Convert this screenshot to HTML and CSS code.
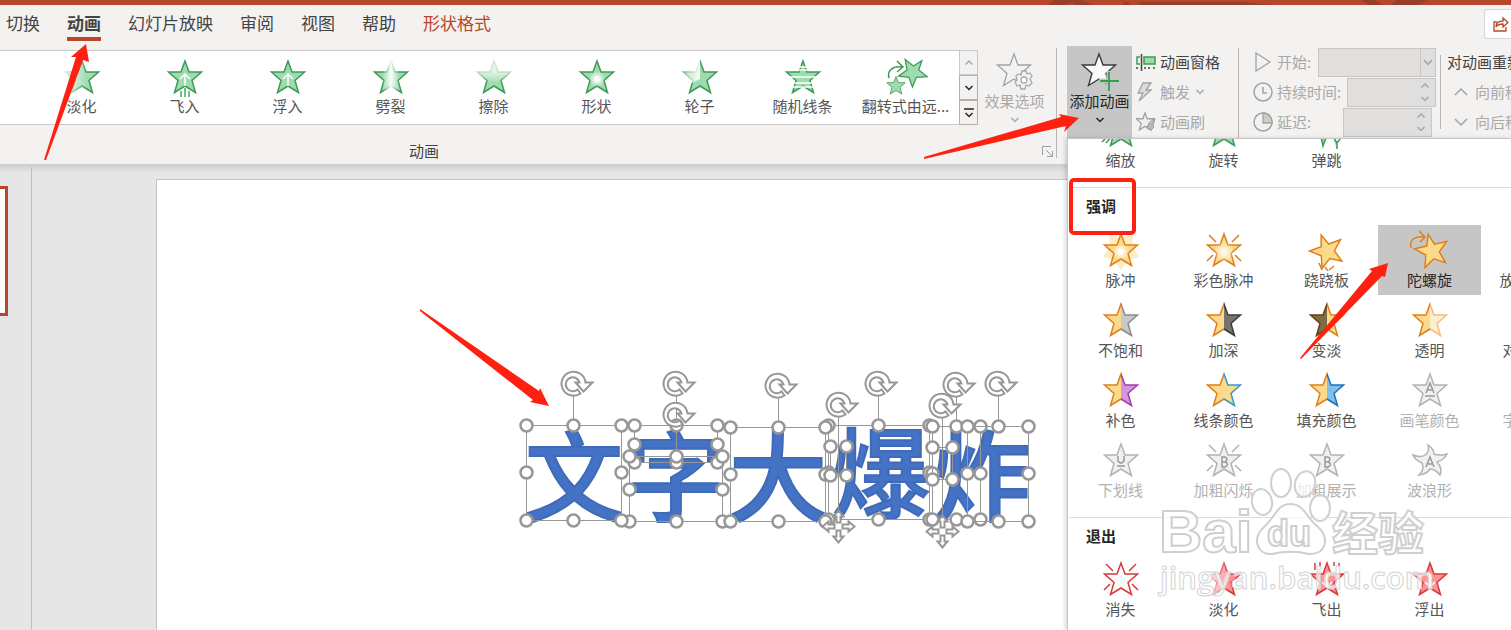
FILE: index.html
```html
<!DOCTYPE html>
<html lang="zh-CN">
<head>
<meta charset="utf-8">
<title>动画</title>
<link rel="stylesheet" href="styles.css">
</head>
<body>
<svg class="defs" aria-hidden="true">
  <defs>
    <path id="star" d="M0-17 4-6H16.500L7 2.500 10.500 14.500 0 8-10.500 14.500-7 2.500-16.500-6H-4Z"/>
    <clipPath id="left-half"><rect x="-22" y="-22" width="22" height="44"/></clipPath>
    <clipPath id="right-half"><rect x="0" y="-22" width="22" height="44"/></clipPath>
    <linearGradient id="fade-left"><stop offset="0" stop-color="#fff" stop-opacity=".9"/><stop offset=".65" stop-color="#fff" stop-opacity="0"/></linearGradient>
    <linearGradient id="fade-mid"><stop offset=".15" stop-color="#fff" stop-opacity="0"/><stop offset=".5" stop-color="#fff" stop-opacity=".95"/><stop offset=".85" stop-color="#fff" stop-opacity="0"/></linearGradient>
    <linearGradient id="fade-top" x2="0" y2="1"><stop offset="0" stop-color="#fff" stop-opacity=".8"/><stop offset=".4" stop-color="#fff" stop-opacity=".7"/><stop offset=".75" stop-color="#fff" stop-opacity="0"/></linearGradient>
    <linearGradient id="fade-quarter"><stop offset="0" stop-color="#fff" stop-opacity=".3"/><stop offset="1" stop-color="#fff" stop-opacity=".9"/></linearGradient>
    <radialGradient id="glow"><stop offset=".2" stop-color="#fff"/><stop offset="1" stop-color="#fff" stop-opacity="0"/></radialGradient>
    <path id="rays" d="M-15-16-8-9M15-16 8-9M-17 10-11 4M17 10 11 4" fill="none"/>
    <path id="down" d="M-3.500-2 0 1.500 3.500-2" fill="none" stroke="currentColor" stroke-width="1.500"/>
    <path id="up" d="M-3.500 1.500 0-2 3.500 1.500" fill="none" stroke="currentColor" stroke-width="1.500"/>
    <path id="rotate" d="M12-1A12 12 0 1 0 7 10L4 6A7 7 0 1 1 6-1H2L10 8 19-1Z"/>
    <path id="move" d="M0-16-5-10H-2V-4H2V-10H5ZM0 16-5 10H-2V4H2V10H5ZM-16 0-10-5V-2H-4V2H-10V5ZM16 0 10-5V-2H4V2H10V5Z"/>
    <marker id="handle" viewBox="-8 -8 16 16" markerWidth="16" markerHeight="16" markerUnits="userSpaceOnUse"><circle r="6" fill="#fff" stroke="#979797" stroke-width="2.500"/></marker>
  </defs>
</svg>

<div class="app">
  <div class="titlebar">
    <svg class="titlebar-art" width="466" height="5" aria-hidden="true"><path d="M3 5 9 0H37L47 5H31L27 2 21 5ZM78 5V2H84V5ZM92 2H200L226 5H96ZM316 0H330L337 5H324ZM345 5 352 0H382L374 5Z" fill="#96402b"/></svg>
  </div>
  <nav class="tabs">
    <a class="tab" href="#">切换</a>
    <a class="tab tab-active" href="#">动画</a>
    <a class="tab" href="#">幻灯片放映</a>
    <a class="tab" href="#">审阅</a>
    <a class="tab" href="#">视图</a>
    <a class="tab" href="#">帮助</a>
    <a class="tab tab-context" href="#">形状格式</a>
    <button class="share" aria-label="共享"><svg width="16" height="16" viewBox="0 0 16 16"><path d="M4 6H1V15H13V11M3 11C3 7 6 5 10 5V2L15 6.500 10 11V8C6 8 4 9 3 11Z" fill="none" stroke="#b7472a" stroke-width="1.300"/></svg></button>
  </nav>

  <div class="ribbon">
    <section class="group group-effects">
      <div class="group-row">
        <div class="gallery">
          <button class="effect"><svg class="icon green" viewBox="-22 -20 44 40"><use href="#star"/><rect class="veil" x="-18" y="-19" width="36" height="36" fill="url(#fade-left)"/></svg><span>淡化</span></button>
          <button class="effect"><svg class="icon green" viewBox="-22 -20 44 40"><use href="#star"/><path d="M0 8V-3M-5 1 0-4 5 1" stroke="#fff" fill="none"/><path d="M-4 13V19M0 10V19M4 13V19" stroke="#6fc088" stroke-width="2"/></svg><span>飞入</span></button>
          <button class="effect"><svg class="icon green" viewBox="-22 -20 44 40"><use href="#star"/><path d="M0 8V-3M-5 1 0-4 5 1" stroke="#fff" fill="none"/></svg><span>浮入</span></button>
          <button class="effect"><svg class="icon green" viewBox="-22 -20 44 40"><use href="#star"/><rect class="veil" x="-12" y="-19" width="24" height="36" fill="url(#fade-mid)"/></svg><span>劈裂</span></button>
          <button class="effect"><svg class="icon green" viewBox="-22 -20 44 40"><use href="#star"/><rect class="veil" x="-18" y="-19" width="36" height="32" fill="url(#fade-top)"/></svg><span>擦除</span></button>
          <button class="effect"><svg class="icon green" viewBox="-22 -20 44 40"><use href="#star"/><circle class="veil" cy="1" r="8" fill="url(#glow)"/></svg><span>形状</span></button>
          <button class="effect"><svg class="icon green" viewBox="-22 -20 44 40"><use href="#star"/><path class="veil" d="M0-19V1L-10 6-18-3V-19Z" fill="url(#fade-quarter)"/></svg><span>轮子</span></button>
          <button class="effect"><svg class="icon green" viewBox="-22 -20 44 40"><use href="#star"/><path d="M-8-11H8M-8-8H8M-15-1H15M-12 5H12M-12 9H12" stroke="#fff" stroke-width="1.300"/></svg><span>随机线条</span></button>
          <button class="effect"><svg class="icon green" viewBox="-22 -20 44 40"><use href="#star" transform="translate(7 -6) rotate(38) scale(.84)"/><use href="#star" transform="translate(-10 8) scale(.56)"/><path d="M-17 0C-19-7-14-12-4-11M-9-17-3-11-9-6" fill="none"/></svg><span>翻转式由远...</span></button>
        </div>
        <div class="scroller">
          <button class="scroll-off" aria-label="上一行"><svg class="chev" viewBox="-6 -6 12 12"><use href="#up"/></svg></button>
          <button aria-label="下一行"><svg class="chev" viewBox="-6 -6 12 12"><use href="#down"/></svg></button>
          <button aria-label="更多"><svg class="chev" viewBox="-6 -6 12 12"><path d="M-5-4H5" stroke="currentColor" stroke-width="1.500"/><use href="#down" y="2"/></svg></button>
        </div>
        <button class="big-button" disabled>
          <svg class="icon" viewBox="-22 -20 44 40"><use href="#star" x="-1" y="-1" fill="#f4f3f4" stroke="#a3a3a3" stroke-width="1.300"/><g transform="translate(9 8)"><path d="M-2-9H2L3-6 6-7 8-4 6-1 8 3 5 6 2 5 1 9H-3L-4 5-7 6-9 2-7 0-8-4-6-6-3-5Z" fill="#f3f2f1" stroke="#a8a8a8" stroke-width="1.300"/><circle r="3" fill="#fff" stroke="#a8a8a8" stroke-width="1.300"/></g></svg>
          <span>效果选项</span>
          <svg class="chev" viewBox="-6 -6 12 12"><use href="#down"/></svg>
        </button>
      </div>
      <div class="group-foot"><span class="group-label">动画</span><button class="launcher" aria-label="更多选项"><svg width="11" height="11" viewBox="0 0 11 11"><path d="M.500 9V.500H9M4 4 10 10M10.500 5V10.500H5" fill="none" stroke="#a0a0a0"/></svg></button></div>
    </section>

    <section class="group group-advanced">
      <button class="big-button big-open">
        <svg class="icon" viewBox="-22 -20 44 40"><use href="#star" x="-1" y="-1" fill="#fafafa" stroke="#3b3b3b" stroke-width="1.400"/><path d="M9-1V19M-1 9H20" stroke="#c6c6c6" stroke-width="5"/><path d="M9 0V19M0 9H19" stroke="#2fa24f" stroke-width="1.800"/></svg>
        <span>添加动画</span>
        <svg class="chev" viewBox="-6 -6 12 12"><use href="#down"/></svg>
      </button>
      <div class="stack">
        <button class="small-button"><svg width="20" height="20" viewBox="0 0 20 20"><path d="M8 5H19V12H8Z" fill="#9ed9ae" stroke="#3d9a57" stroke-width="1.500"/><path d="M4 5H1V12H4" fill="none" stroke="#3d9a57" stroke-width="1.500"/><path d="M5.500 2V19M1 15V17M9 15V17M13 15V17M18 15V17" stroke="#444" stroke-width="1.500"/></svg><span>动画窗格</span></button>
        <button class="small-button" disabled><svg width="20" height="20" viewBox="0 0 20 20"><path d="M7 1H15L10 8H15L3 19 7 11H2Z" fill="#dcdcdc" stroke="#a3a3a3" stroke-width="1.300"/></svg><span>触发</span><svg class="chev" viewBox="-6 -6 12 12"><use href="#down"/></svg></button>
        <button class="small-button" disabled><svg width="20" height="20" viewBox="-10 -10 20 20"><use href="#star" transform="translate(-1 0) scale(.54)" fill="#eee" stroke="#a3a3a3" stroke-width="2.500"/><path d="M9-3 5 2 2 3 1 6 5 8 8 5 7 3Z" fill="#bbb" stroke="#999"/></svg><span>动画刷</span></button>
      </div>
    </section>

    <section class="group group-timing">
      <div class="field"><svg width="20" height="20" viewBox="0 0 20 20"><path d="M3 1 17 10 3 19Z" fill="none" stroke="#a3a3a3" stroke-width="1.300"/></svg><label for="start">开始:</label><span class="control control-start"><select id="start" disabled><option></option></select><svg class="chev" viewBox="-6 -6 12 12"><use href="#down"/></svg></span></div>
      <div class="field"><svg width="20" height="20" viewBox="0 0 20 20"><circle cx="10" cy="10" r="9" fill="none" stroke="#a3a3a3" stroke-width="1.500"/><path d="M10 5V11H14" fill="none" stroke="#a3a3a3" stroke-width="1.500"/></svg><label for="duration">持续时间:</label><span class="control"><input id="duration" disabled><span class="spin"><svg class="chev" viewBox="-6 -6 12 12"><use href="#up"/></svg><svg class="chev" viewBox="-6 -6 12 12"><use href="#down"/></svg></span></span></div>
      <div class="field field-delay"><svg width="20" height="20" viewBox="0 0 20 20"><circle cx="10" cy="10" r="9" fill="none" stroke="#a3a3a3" stroke-width="1.500"/><path d="M10 1A9 9 0 0 1 19 11H10Z" fill="#ccc" stroke="#a3a3a3" stroke-width="1.300"/></svg><label for="delay">延迟:</label><span class="control"><input id="delay" disabled><span class="spin"><svg class="chev" viewBox="-6 -6 12 12"><use href="#up"/></svg><svg class="chev" viewBox="-6 -6 12 12"><use href="#down"/></svg></span></span></div>
    </section>

    <section class="reorder">
      <div class="reorder-title">对动画重新排序</div>
      <button class="small-button" disabled><svg width="14" height="14" viewBox="-7 -7 14 14"><path d="M-6 3 0-3 6 3" fill="none" stroke="#a3a3a3" stroke-width="1.500"/></svg><span>向前移动</span></button>
      <button class="small-button" disabled><svg width="14" height="14" viewBox="-7 -7 14 14"><path d="M-6-3 0 3 6-3" fill="none" stroke="#a3a3a3" stroke-width="1.500"/></svg><span>向后移动</span></button>
    </section>
  </div>

  <main class="workspace">
    <aside class="thumbs"><div class="thumb"></div></aside>
    <div class="stage">
      <div class="slide">
        <svg class="canvas" viewBox="157 180 900 450" width="900" height="450">
          <text class="art-text" x="574" y="513">文</text>
          <text class="art-text" x="676" y="513">字</text>
          <text class="art-text" x="778" y="513">大</text>
          <text class="art-text" x="881" y="510">爆</text>
          <text class="art-text" x="982" y="513">炸</text>
          <g class="selection" transform="translate(.500 .500)">
            <path d="M573 425V395M676 425V395M676 456V426M778 427V397M878 425V395M838 520V416M942 526V417M956 426V396M998 425V395"/>
            <g class="frames">
              <path d="M634 425H676 717V444 462H676 634V444Z"/>
              <path d="M629 456H676 722V489 521H676 629V489Z"/>
              <path d="M526 425H573 621V472 520H573 526V472Z"/>
              <path d="M828 425H878 929V472 519H878 828V472Z"/>
              <path d="M730 427H778 825V474 521H778 730V474Z"/>
              <path d="M830 446H846V475H830Z"/>
              <path d="M932 426H956 980V473 519H956 932V473Z"/>
              <path d="M967 426H998 1028V473 521H998 967V473Z"/>
              <path d="M932 447H952V479H932Z"/>
            </g>
            <g class="glyphs">
              <use href="#rotate" x="573" y="383"/><use href="#rotate" x="675" y="383"/><use href="#rotate" x="675" y="414"/><use href="#rotate" x="777" y="385"/><use href="#rotate" x="838" y="404"/><use href="#rotate" x="877" y="383"/><use href="#rotate" x="955" y="384"/><use href="#rotate" x="941" y="405"/><use href="#rotate" x="997" y="383"/>
              <use href="#move" x="838" y="526"/><use href="#move" x="942" y="531"/>
            </g>
          </g>
        </svg>
      </div>
    </div>
  </main>

  <div class="menu">
    <div class="menu-scroll">
      <div class="menu-grid">
        <button class="effect"><svg class="icon green" viewBox="-22 -20 44 40"><use href="#star"/><path d="M-19 11-15 7M-15 12-10 6"/></svg><span>缩放</span></button>
        <button class="effect"><svg class="icon green" viewBox="-22 -20 44 40"><use href="#star"/></svg><span>旋转</span></button>
        <button class="effect"><svg class="icon green" viewBox="-22 -20 44 40"><path d="M-8-4-4 15 0 4M5 4 10 12V18M10 12 16 4"/></svg><span>弹跳</span></button>
      </div>
      <h2 class="menu-title">强调</h2>
      <div class="menu-grid">
        <button class="effect"><svg class="icon amber" viewBox="-22 -20 44 40"><path d="M-12-17 0-13 12-17 11-6 18 6 7 9 0 19-7 9-18 6-11-6Z" fill="#fdecc4" stroke="none"/><use href="#star"/><circle r="8" cy="1" class="veil" fill="url(#glow)"/></svg><span>脉冲</span></button>
        <button class="effect"><svg class="icon amber" viewBox="-22 -20 44 40"><use href="#star"/><circle r="10" cy="1" class="veil" fill="url(#glow)" opacity=".8"/><use href="#rays"/></svg><span>彩色脉冲</span></button>
        <button class="effect"><svg class="icon amber" viewBox="-22 -20 44 40"><use href="#star" transform="rotate(-20)"/><path d="M-8 12-5 19M-2 16 1 20M7 15 2 19" fill="none"/></svg><span>跷跷板</span></button>
        <button class="effect effect-hover"><svg class="icon amber" viewBox="-22 -20 44 40"><use href="#star" transform="translate(2 0) rotate(-13)"/><path d="M-19-3C-21-12-15-15-5-14M-11-20-5-14-10-9" fill="none"/></svg><span>陀螺旋</span></button>
        <button class="effect"><svg class="icon amber" viewBox="-22 -20 44 40"><use href="#star"/></svg><span>放大/缩小</span></button>

        <button class="effect"><svg class="icon amber" viewBox="-22 -20 44 40"><use href="#star" clip-path="url(#left-half)"/><use href="#star" clip-path="url(#right-half)" fill="#c9c9c9" stroke="#8b8b8b"/></svg><span>不饱和</span></button>
        <button class="effect"><svg class="icon amber" viewBox="-22 -20 44 40"><use href="#star" clip-path="url(#left-half)"/><use href="#star" clip-path="url(#right-half)" fill="#757471" stroke="#3d3d3d"/></svg><span>加深</span></button>
        <button class="effect"><svg class="icon amber" viewBox="-22 -20 44 40"><use href="#star" clip-path="url(#left-half)" fill="#7e6c45" stroke="#6e3d10"/><use href="#star" clip-path="url(#right-half)"/></svg><span>变淡</span></button>
        <button class="effect"><svg class="icon amber" viewBox="-22 -20 44 40"><use href="#star" clip-path="url(#left-half)"/><use href="#star" clip-path="url(#right-half)" fill="#feefcc" stroke="#f3bd83"/></svg><span>透明</span></button>
        <button class="effect"><svg class="icon amber" viewBox="-22 -20 44 40"><use href="#star"/></svg><span>对象颜色</span></button>

        <button class="effect"><svg class="icon amber" viewBox="-22 -20 44 40"><use href="#star" clip-path="url(#left-half)"/><use href="#star" clip-path="url(#right-half)" fill="#d595dc" stroke="#a13fac"/></svg><span>补色</span></button>
        <button class="effect"><svg class="icon amber" viewBox="-22 -20 44 40"><use href="#star" clip-path="url(#left-half)"/><use href="#star" clip-path="url(#right-half)" stroke="#2e9bd6"/></svg><span>线条颜色</span></button>
        <button class="effect"><svg class="icon amber" viewBox="-22 -20 44 40"><use href="#star" clip-path="url(#left-half)"/><use href="#star" clip-path="url(#right-half)" fill="#83beec" stroke="#1c71b9"/></svg><span>填充颜色</span></button>
        <button class="effect" disabled><svg class="icon grey" viewBox="-22 -20 44 40"><use href="#star"/><path d="M-4 2 0-8 4 2M-3-1H3M-5 5H5" fill="none" stroke="#999"/></svg><span>画笔颜色</span></button>
        <button class="effect" disabled><svg class="icon grey" viewBox="-22 -20 44 40"><use href="#star"/></svg><span>字体颜色</span></button>

        <button class="effect" disabled><svg class="icon grey" viewBox="-22 -20 44 40"><use href="#star"/><path d="M-3-5V0Q0 4 3 0V-5M-4 5H4" fill="none" stroke="#999"/></svg><span>下划线</span></button>
        <button class="effect" disabled><svg class="icon grey" viewBox="-22 -20 44 40"><use href="#star"/><use href="#rays"/><path d="M-2-4V6H1Q6 3 1 1H-2 1Q5-2 1-4Z" stroke="#999"/></svg><span>加粗闪烁</span></button>
        <button class="effect" disabled><svg class="icon grey" viewBox="-22 -20 44 40"><use href="#star"/><path d="M-2-4V6H1Q6 3 1 1H-2 1Q5-2 1-4Z" stroke="#999"/></svg><span>加粗展示</span></button>
        <button class="effect" disabled><svg class="icon grey" viewBox="-22 -20 44 40"><path d="M-2-16Q4-12 4-7 10-5 17-7 14-1 7 1 13 7 10 14 5 8 0 8-3 13-11 14-5 8-8 2-15-1-17-6-9-3-5-6 0-9-2-16Z"/><path d="M-4 6 0-4 4 6M-2 3H3" fill="none" stroke="#999"/></svg><span>波浪形</span></button>
      </div>
      <h2 class="menu-title">退出</h2>
      <div class="menu-grid">
        <button class="effect"><svg class="icon red" viewBox="-22 -20 44 40"><use href="#star" fill="#fafafa"/><use href="#rays"/></svg><span>消失</span></button>
        <button class="effect"><svg class="icon red" viewBox="-22 -20 44 40"><use href="#star"/><rect class="veil" x="-18" y="-19" width="36" height="36" fill="url(#fade-left)"/></svg><span>淡化</span></button>
        <button class="effect"><svg class="icon red" viewBox="-22 -20 44 40"><use href="#star"/><path d="M-12-17V-10M-7-18V-14M7-18V-14M12-17V-13"/><path d="M0-7V6M-5 2 0 7 5 2" fill="none" stroke="#fff"/></svg><span>飞出</span></button>
        <button class="effect"><svg class="icon red" viewBox="-22 -20 44 40"><use href="#star"/><path d="M0-7V6M-5 2 0 7 5 2" fill="none" stroke="#fff"/></svg><span>浮出</span></button>
      </div>
    </div>
  </div>

  <svg class="overlay" width="1511" height="630" viewBox="0 0 1511 630">
    <g class="watermark">
      <text class="wm-brand" x="1159" y="552">Bai</text>
      <path d="M1290 504C1277 504 1275 518 1264 527 1252 537 1256 555 1272 554 1285 551 1296 551 1309 554 1326 555 1330 538 1318 527 1306 518 1305 504 1290 504Z"/>
      <ellipse cx="1281" cy="483" rx="10" ry="14"/><ellipse cx="1305" cy="484" rx="10" ry="13" transform="rotate(15 1305 484)"/><ellipse cx="1262" cy="502" rx="10" ry="13" transform="rotate(-12 1262 502)"/><ellipse cx="1320" cy="508" rx="10" ry="13"/>
      <text class="wm-du" x="1267" y="546">du</text>
      <text class="wm-cn" x="1332" y="550">经验</text>
      <text class="wm-url" x="1160" y="589">jingyan.baidu.com</text>
    </g>
    <g class="marks">
      <path d="M86 44 89 62 83 60 46 160H44L76 57 71 57Z"/>
      <path d="M1079 118 1064 132 1066 126 924 159V157L1061 117 1059 114Z"/>
      <path d="M549 406 530 402 533 400 420 311V309L539 391 540 388Z"/>
      <path d="M1388 263 1385 277 1382 276 1301 359 1300 358 1372 271 1369 269Z"/>
      <rect x="1071" y="180" width="63" height="53" rx="3"/>
    </g>
  </svg>
</div>
</body>
</html>
```
FILE: styles.css
```css
* { box-sizing: border-box; }

body {
  margin: 0;
  font-family: "Noto Sans CJK SC", "Noto Sans", sans-serif;
  font-size: 15px;
  line-height: 20px;
  color: #444;
}

button, input, select { font: inherit; color: inherit; }

button {
  margin: 0;
  padding: 0;
  border: 0;
  background: none;
  white-space: nowrap;
}

svg { flex: none; }

.defs { position: absolute; width: 0; height: 0; }

.app {
  position: relative;
  display: flex;
  flex-direction: column;
  min-height: 100vh;
  overflow: hidden;
  background: #e6e6e6;
}

.titlebar {
  display: flex;
  justify-content: flex-end;
  height: 5px;
  background: #b7472a;
}

.tabs {
  display: flex;
  align-items: flex-start;
  gap: 27px;
  padding: 6px 0 5px 6px;
  background: #f3f2f1;
}

.tab {
  height: 30px;
  font-size: 17px;
  line-height: 23px;
  color: #444;
  text-decoration: none;
  border-bottom: 4px solid transparent;
  white-space: nowrap;
}

.tab-active { font-weight: 700; border-color: #b7472a; }
.tab-context { color: #b7472a; }

.share {
  display: flex;
  align-items: center;
  width: 27px;
  height: 30px;
  margin: -2px 0 -5px auto;
  padding-left: 8px;
  background: #fff;
  border: 1px solid #d8d6d4;
  border-right: 0;
  border-radius: 3px 0 0 3px;
}

.ribbon {
  display: flex;
  height: 118px;
  overflow: hidden;
  background: #f3f2f1;
}

.group { position: relative; display: flex; flex: none; }

.group::after {
  content: "";
  align-self: flex-start;
  width: 1px;
  height: 110px;
  margin-top: 2px;
  background: #b8b6b4;
}

.group-effects { width: 1057px; flex-wrap: wrap; }
.group-effects::after { position: absolute; top: 0; right: 0; }

.group-row { display: flex; width: 100%; }

.gallery {
  display: flex;
  height: 75px;
  width: 959px;
  margin-top: 4px;
  padding-left: 30px;
  background: #fff;
  border-top: 1px solid #cccac8;
  border-bottom: 1px solid #cccac8;
}

.effect {
  display: flex;
  flex-direction: column;
  align-items: center;
  flex: none;
  width: 103px;
  height: 70px;
  padding-top: 6px;
  color: #555;
}

.effect .icon { margin-bottom: -1px; }
.gallery .effect { padding-top: 7px; height: 73px; }
.gallery .icon { margin-bottom: -2px; }

.effect:disabled { color: #b1b1b1; }
.effect-hover { background: #c6c6c6; color: #262626; }

.icon { width: 44px; height: 40px; stroke-width: 1.5px; }
.green { fill: #9edcae; stroke: #3d9a57; }
.amber { fill: #fbda8c; stroke: #e07f1c; }
.red { fill: #ff9095; stroke: #d8393b; }
.grey { fill: #f1eff2; stroke: #b3b3b3; }
.veil { stroke: none; }

.chev { width: 12px; height: 12px; }

.scroller {
  display: flex;
  flex-direction: column;
  width: 19px;
  height: 75px;
  margin-top: 4px;
  color: #262626;
}

.scroller button {
  display: flex;
  align-items: center;
  justify-content: center;
  flex: 1;
  border: 1px solid #b3b0ad;
}

.scroller .scroll-off { color: #a8a8a8; border-color: #cccac8; }

.big-button {
  display: flex;
  flex-direction: column;
  align-items: center;
  flex: none;
  width: 65px;
  height: 92px;
  padding-top: 6px;
  color: #262626;
}

.big-button .icon { margin-bottom: -1px; }
.big-button:disabled { margin-left: 4px; color: #a8a8a8; }
.big-button .chev { margin-top: 3px; }
.big-open { background: #c6c6c6; }

.group-foot {
  display: flex;
  align-items: center;
  width: 100%;
  height: 26px;
  padding-right: 4px;
}

.group-label { flex: 1; padding-right: 194px; text-align: center; }
.launcher { display: flex; }

.group-advanced { padding-left: 10px; }
.group-advanced::after, .group-timing::after { height: 90px; }

.stack {
  display: flex;
  flex-direction: column;
  width: 106px;
  padding: 1px 0 0 4px;
}

.small-button {
  display: flex;
  align-items: center;
  gap: 4px;
  height: 30px;
}

.small-button:disabled { color: #a8a8a8; }

.group-timing {
  display: flex;
  flex-direction: column;
  width: 202px;
  padding: 1px 5px 0 14px;
  color: #a8a8a8;
}

.group-timing::after { position: absolute; top: 7px; right: 0; height: 74px; }

.field {
  display: flex;
  align-items: center;
  gap: 4px;
  height: 30px;
}

.field-delay { padding-right: 4px; }

.control {
  position: relative;
  display: flex;
  width: 89px;
  height: 29px;
  margin-left: auto;
}

.control-start { width: 118px; }

.control select, .control input {
  width: 100%;
  height: 100%;
  padding: 0 4px;
  appearance: none;
  background: #e1dfdd;
  border: 1px solid #c8c6c4;
  border-radius: 0;
  opacity: 1;
}

.control-start > .chev {
  position: absolute;
  right: 1px;
  top: 0;
  width: 15px;
  height: 29px;
  border-left: 1px solid #c8c6c4;
}

.spin {
  position: absolute;
  top: 0;
  right: 5px;
  display: flex;
  flex-direction: column;
  justify-content: space-between;
  height: 29px;
  padding: 2px 0;
}

.reorder { flex: none; padding: 1px 0 0 6px; }
.reorder-title { line-height: 30px; white-space: nowrap; }
.reorder .small-button { gap: 7px; padding-left: 7px; }

.workspace {
  display: flex;
  flex: 1;
  background: linear-gradient(#cdcdcd, #e6e6e6 9px);
}

.thumbs {
  width: 32px;
  margin-top: 3px;
  padding-top: 19px;
  border-right: 1px solid #bebebe;
}

.thumb {
  width: 8px;
  height: 130px;
  background: #fff;
  border: 3px solid #b7472a;
  border-left: 0;
}

.stage { display: flex; flex: 1; padding: 15px 0 0 124px; }

.slide {
  flex: 1;
  background: #fff;
  border: 1px solid #c4c4c4;
  border-width: 1px 0 0 1px;
}

.canvas { display: block; }

.art-text {
  font-size: 98px;
  font-weight: 500;
  text-anchor: middle;
  fill: #4472c4;
  stroke: #3f6bb9;
  stroke-width: 2px;
}

.selection { fill: none; stroke: #979797; stroke-width: 1px; }
.frames path { marker-start: url(#handle); marker-mid: url(#handle); }
.glyphs { fill: #fff; stroke-width: 2px; }

.menu {
  position: absolute;
  top: 138px;
  right: 0;
  bottom: 0;
  left: 1067px;
  overflow: hidden;
  background: #fff;
  border: 1px solid #c6c6c6;
  border-width: 1px 0 0 1px;
  box-shadow: -2px 0 4px rgba(0, 0, 0, 0.15);
}

.menu-scroll { width: 517px; margin-top: -34px; padding-left: 1px; }

.menu-grid { display: grid; grid-template-columns: repeat(5, 103px); }

.menu-title {
  margin: 12px 0 0;
  padding: 8px 0 9px 17px;
  border-top: 1px solid #dcdcdc;
  font-size: 15px;
  line-height: 20px;
  font-weight: 700;
  color: #262626;
}

.menu-grid + .menu-title ~ .menu-title { padding-bottom: 8px; }

.overlay { position: absolute; top: 0; left: 0; pointer-events: none; }

.marks { fill: #ff2012; }
.marks rect { fill: none; stroke: #ff2012; stroke-width: 4px; }

.watermark {
  fill: rgba(255, 255, 255, 0.7);
  stroke: #cfcfcf;
  stroke-width: 2px;
  font-family: "Liberation Sans", "Noto Sans CJK SC", sans-serif;
  font-weight: 700;
}

.wm-brand { font-size: 60px; }
.wm-du { font-size: 36px; }
.wm-cn { font-size: 46px; }

.wm-url {
  font-family: "Open Sans", sans-serif;
  font-size: 31px;
  font-weight: 600;
  stroke: #d4d4d4;
  stroke-width: 1px;
}
```
